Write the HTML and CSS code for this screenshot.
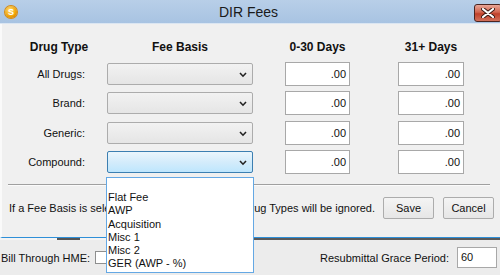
FILE: index.html
```html
<!DOCTYPE html>
<html>
<head>
<meta charset="utf-8">
<link rel="stylesheet" href="styles.css">
</head>
<body>
<div class="window">
  <div class="titlebar">
    <span class="app-icon">S</span>
    <span class="title">DIR Fees</span>
    <span class="close"><svg width="14" height="10" viewBox="0 0 14 10"><path d="M2 1 L12 9 M12 1 L2 9" stroke="#3a1a14" stroke-width="4" stroke-linecap="round"/><path d="M2 1 L12 9 M12 1 L2 9" stroke="#fff" stroke-width="2.2" stroke-linecap="round"/></svg></span>
  </div>
  <div class="dialog">
    <div class="grid">
      <div class="hdr hdr-type">Drug Type</div>
      <div class="hdr hdr-basis">Fee Basis</div>
      <div class="hdr hdr-a">0-30 Days</div>
      <div class="hdr hdr-b">31+ Days</div>

      <div class="label">All Drugs:</div>
      <div class="cell"><div class="select"><svg class="chev" width="8" height="6" viewBox="0 0 8 6"><path d="M1 1 L4 4.2 L7 1" fill="none" stroke="#222" stroke-width="1.6"/></svg></div></div>
      <div class="cell"><div class="num">.00</div></div>
      <div class="cell"><div class="num wide">.00</div></div>

      <div class="label">Brand:</div>
      <div class="cell"><div class="select"><svg class="chev" width="8" height="6" viewBox="0 0 8 6"><path d="M1 1 L4 4.2 L7 1" fill="none" stroke="#222" stroke-width="1.6"/></svg></div></div>
      <div class="cell"><div class="num">.00</div></div>
      <div class="cell"><div class="num wide">.00</div></div>

      <div class="label">Generic:</div>
      <div class="cell"><div class="select"><svg class="chev" width="8" height="6" viewBox="0 0 8 6"><path d="M1 1 L4 4.2 L7 1" fill="none" stroke="#222" stroke-width="1.6"/></svg></div></div>
      <div class="cell"><div class="num">.00</div></div>
      <div class="cell"><div class="num wide">.00</div></div>

      <div class="label">Compound:</div>
      <div class="cell"><div class="select active"><svg class="chev" width="8" height="6" viewBox="0 0 8 6"><path d="M1 1 L4 4.2 L7 1" fill="none" stroke="#222" stroke-width="1.6"/></svg></div></div>
      <div class="cell"><div class="num">.00</div></div>
      <div class="cell"><div class="num wide">.00</div></div>
    </div>
    <div class="sep"></div>
    <div class="footer">
      <span class="note">If a Fee Basis is selected for All Drugs, all other Drug Types will be ignored.</span>
      <button class="btn">Save</button>
      <button class="btn">Cancel</button>
    </div>
  </div>
  <div class="parent">
    <div class="edge"></div>
    <div class="bottom">
      <span class="bill">Bill Through HME:</span>
      <span class="check"></span>
      <span class="grace">Resubmittal Grace Period:</span>
      <span class="grace-box">60</span>
    </div>
  </div>
  <ul class="droplist">
    <li>&nbsp;</li>
    <li>Flat Fee</li>
    <li>AWP</li>
    <li>Acquisition</li>
    <li>Misc 1</li>
    <li>Misc 2</li>
    <li>GER (AWP - %)</li>
  </ul>
</div>
</body>
</html>
```

FILE: styles.css
```css
html, body {
  margin: 0;
  padding: 0;
}
body {
  width: 500px;
  height: 275px;
  overflow: hidden;
  font-family: "Liberation Sans", Arial, sans-serif;
  font-size: 11px;
  color: #111;
  background: #ececec;
}
.window {
  position: relative;
  width: 500px;
  height: 275px;
}
.titlebar {
  height: 24px;
  display: flex;
  align-items: center;
  position: relative;
  background: linear-gradient(#b8cfe8, #a8c3e2);
  border-bottom: 1px solid #dbe6f2;
  box-sizing: border-box;
}
.app-icon {
  width: 12px;
  height: 12px;
  margin-left: 5px;
  border-radius: 50%;
  background: radial-gradient(circle at 40% 35%, #ffe07a, #f0a000 60%, #c86a00);
  color: #fff;
  font-weight: bold;
  font-size: 9px;
  line-height: 12px;
  text-align: center;
  box-shadow: 0 0 0 1px #d88a10;
}
.title {
  flex: 1;
  text-align: center;
  font-size: 14px;
  color: #1a1a1a;
  margin-left: 6px;
}
.close {
  width: 28px;
  height: 18px;
  margin-right: -2px;
  align-self: flex-start;
  border: 1px solid #4a2420;
  border-radius: 3px;
  background: linear-gradient(#e8a698, #d2654f 45%, #c0402a 55%, #d2705a);
  display: flex;
  align-items: center;
  justify-content: center;
  box-sizing: border-box;
  margin-top: 4px;
}
.dialog {
  height: 214px;
  background: #f0f0f0;
  border-bottom: 1px solid #2e8fd8;
  border-left: 2px solid #fafafa;
  box-sizing: border-box;
  padding-top: 14px;
}
.grid {
  display: grid;
  grid-template-columns: 105px 178px 113px 66px;
  grid-template-rows: 18px 24px 24px 24px 24px;
  row-gap: 5.5px;
}
.grid .hdr {
  font-weight: bold;
  font-size: 12px;
  line-height: 18px;
  margin-bottom: 3.5px;
  align-self: start;
}
.hdr-type { text-align: center; padding-left: 9px; }
.hdr-basis { width: 146px; text-align: center; }
.hdr-a { width: 65px; text-align: center; }
.hdr-b { width: 66px; text-align: center; }
.label {
  text-align: right;
  padding-right: 22px;
  line-height: 24px;
}
.cell {
  display: flex;
  align-items: center;
}
.select {
  width: 146px;
  height: 22px;
  box-sizing: border-box;
  border: 1px solid #acacac;
  border-radius: 2px;
  background: linear-gradient(#f2f2f2, #e5e5e5);
  position: relative;
}
.select.active {
  border-color: #3c7fb1;
  background: linear-gradient(#eaf6fd, #d4ecfb 50%, #bee6fd);
}
.chev {
  position: absolute;
  right: 5px;
  top: 8px;
}
.num {
  width: 65px;
  height: 24px;
  box-sizing: border-box;
  border: 1px solid #a8a8a8;
  background: #fff;
  text-align: right;
  padding-right: 3px;
  line-height: 22px;
}
.num.wide { width: 66px; }
.sep {
  margin: 10px 10px 0 6px;
  height: 1px;
  background: #a0a0a0;
  border-bottom: 1px solid #fbfbfb;
}
.footer {
  display: flex;
  align-items: center;
  margin-top: 11px;
  padding-left: 7px;
}
.note {
  flex: 1;
  white-space: nowrap;
}
.btn {
  font-family: inherit;
  font-size: 11px;
  color: #111;
  width: 51px;
  height: 22px;
  padding: 0;
  margin-right: 9px;
  border: 1px solid #acacac;
  border-radius: 2px;
  background: linear-gradient(#f4f4f4, #e6e6e6);
}
.btn:last-child { margin-right: 6px; }
.parent {
  height: 37px;
  background: #ececec;
}
.edge {
  height: 2px;
  background: linear-gradient(90deg, #f4f4f4 0, #f4f4f4 57px, #555 57px, #555 80px, #f4f4f4 80px, #f4f4f4 252px, #5a5a5a 252px);
}
.bottom {
  display: flex;
  align-items: center;
  height: 35px;
  padding-left: 1px;
}
.check {
  width: 13px;
  height: 13px;
  box-sizing: border-box;
  border: 1px solid #8e8f8f;
  background: #fff;
  margin-left: 5px;
}
.grace {
  margin-left: auto;
  margin-right: 8px;
}
.grace-box {
  width: 40px;
  height: 21px;
  box-sizing: border-box;
  border: 1px solid #a8a8a8;
  background: #fff;
  padding-left: 3px;
  line-height: 19px;
  margin-right: 3px;
}
.droplist {
  position: absolute;
  left: 106px;
  top: 177px;
  width: 148px;
  height: 96px;
  margin: 0;
  padding: 0 0 0 1px;
  list-style: none;
  box-sizing: border-box;
  background: #fff;
  border: 1px solid #64a8e4;
  font-size: 11px;
}
.droplist li {
  height: 13.2px;
  line-height: 13px;
}
```
